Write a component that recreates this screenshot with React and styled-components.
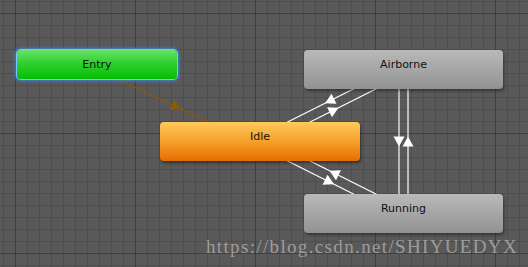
import React from 'react';
import styled, { createGlobalStyle, css } from 'styled-components';

const GlobalStyle = createGlobalStyle`
  html, body {
    margin: 0;
    padding: 0;
    background: #585858;
  }
`;

const Canvas = styled.div`
  position: relative;
  width: 528px;
  height: 267px;
  overflow: hidden;
  background-color: #595959;
  background-image:
    linear-gradient(to right, #3f3f3f 1px, transparent 1px),
    linear-gradient(to bottom, #3f3f3f 1px, transparent 1px),
    linear-gradient(to right, #4e4e4e 1px, transparent 1px),
    linear-gradient(to bottom, #4e4e4e 1px, transparent 1px);
  background-size: 120px 120px, 120px 120px, 12px 12px, 12px 12px;
  background-position: 15px 13px, 15px 13px, 3px 1px, 3px 1px;
  font-family: 'DejaVu Sans', Verdana, sans-serif;
`;

const Links = styled.svg`
  position: absolute;
  left: 0;
  top: 0;
`;

const variants = {
  entry: css`
    background: linear-gradient(#66e266, #2fd02f 45%, #05bd05);
    border-radius: 4px;
    box-shadow: 0 0 0 1px #7cc4ff, 0 0 3px 2px rgba(58, 140, 230, 0.9);
  `,
  default: css`
    background: linear-gradient(#ffca5c, #f6a02a 50%, #e66e00);
    border-radius: 4px;
    box-shadow: 1px 2px 3px rgba(0, 0, 0, 0.45);
  `,
  state: css`
    background: linear-gradient(#b9b9b9, #a6a6a6 50%, #929292);
    border-radius: 4px;
    box-shadow: 1px 2px 3px rgba(0, 0, 0, 0.4);
  `,
};

const Node = styled.div`
  position: absolute;
  box-sizing: border-box;
  padding-top: 8px;
  text-align: center;
  font-size: 11px;
  line-height: 13px;
  color: #111;
  ${(p) => variants[p.$kind]}
`;

const Watermark = styled.div`
  position: absolute;
  right: 10px;
  bottom: 9px;
  font-family: 'Liberation Serif', 'Times New Roman', serif;
  font-size: 19px;
  letter-spacing: 1.35px;
  color: rgba(205, 205, 205, 0.6);
  white-space: nowrap;
`;

const nodes = [
  { id: 'entry', label: 'Entry', kind: 'entry', x: 17, y: 50, w: 160, h: 29 },
  { id: 'airborne', label: 'Airborne', kind: 'state', x: 304, y: 50, w: 199, h: 39 },
  { id: 'idle', label: 'Idle', kind: 'default', x: 160, y: 122, w: 200, h: 39 },
  { id: 'running', label: 'Running', kind: 'state', x: 304, y: 194, w: 199, h: 39 },
];

const center = (id) => {
  const n = nodes.find((m) => m.id === id);
  return [n.x + n.w / 2, n.y + n.h / 2];
};

// transitions drawn centre to centre, shifted sideways so pairs sit apart
const transitions = [
  { from: 'entry', to: 'idle', offset: 4.5, color: '#8c5a06' },
  { from: 'idle', to: 'airborne', offset: 5, color: '#fff' },
  { from: 'airborne', to: 'idle', offset: 5, color: '#fff' },
  { from: 'idle', to: 'running', offset: 5, color: '#fff' },
  { from: 'running', to: 'idle', offset: 5, color: '#fff' },
  { from: 'airborne', to: 'running', offset: 4.5, color: '#fff' },
  { from: 'running', to: 'airborne', offset: 4.5, color: '#fff' },
];

function Transition({ from, to, offset, color }) {
  const [ax, ay] = center(from);
  const [bx, by] = center(to);
  const len = Math.hypot(bx - ax, by - ay);
  const dx = (bx - ax) / len;
  const dy = (by - ay) / len;
  // perpendicular to the right of travel
  const px = -dy * offset;
  const py = dx * offset;
  const x1 = ax + px;
  const y1 = ay + py;
  const x2 = bx + px;
  const y2 = by + py;
  const mx = (x1 + x2) / 2;
  const my = (y1 + y2) / 2;
  const L = 5;
  const W = 5.5;
  const tip = [mx + dx * L, my + dy * L];
  const b1 = [mx - dx * L - dy * W, my - dy * L + dx * W];
  const b2 = [mx - dx * L + dy * W, my - dy * L - dx * W];
  return (
    <g>
      <line x1={x1} y1={y1} x2={x2} y2={y2} stroke={color} strokeWidth="1.2" />
      <polygon points={[tip, b1, b2].map((p) => p.join(',')).join(' ')} fill={color} />
    </g>
  );
}

export default function App() {
  return (
    <>
      <GlobalStyle />
      <Canvas>
        <Links width="528" height="267">
          {transitions.map((t, i) => (
            <Transition key={i} {...t} />
          ))}
        </Links>
        {nodes.map((n) => (
          <Node
            key={n.id}
            $kind={n.kind}
            style={{ left: n.x, top: n.y, width: n.w, height: n.h }}
          >
            {n.label}
          </Node>
        ))}
        <Watermark>https://blog.csdn.net/SHIYUEDYX</Watermark>
      </Canvas>
    </>
  );
}
